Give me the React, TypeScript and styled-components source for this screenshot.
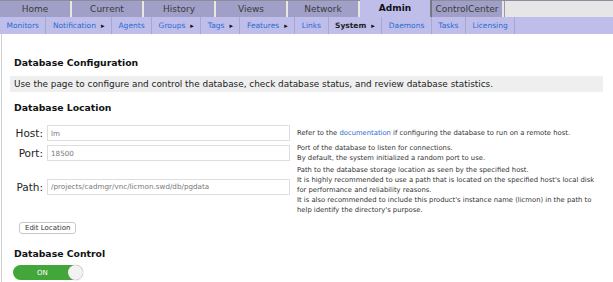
import styled, { createGlobalStyle } from "styled-components";

const GlobalStyle = createGlobalStyle`
  html, body {
    margin: 0;
    padding: 0;
    background: #fff;
    font-family: "DejaVu Sans", Verdana, sans-serif;
  }
`;

const tabs = [
  "Home",
  "Current",
  "History",
  "Views",
  "Network",
  "Admin",
  "ControlCenter",
];

const subItems = [
  { label: "Monitors" },
  { label: "Notification", arrow: true },
  { label: "Agents" },
  { label: "Groups", arrow: true },
  { label: "Tags", arrow: true },
  { label: "Features", arrow: true },
  { label: "Links" },
  { label: "System", arrow: true, active: true },
  { label: "Daemons" },
  { label: "Tasks" },
  { label: "Licensing" },
];

export default function App() {
  return (
    <>
      <GlobalStyle />
      <TabBar>
        {tabs.map((t) => (
          <Tab key={t} $active={t === "Admin"}>
            {t}
          </Tab>
        ))}
        <TabFill />
      </TabBar>
      <SubNav>
        {subItems.map((s) => (
          <SubItem key={s.label} $active={s.active}>
            {s.label}
            {s.arrow && <Arrow>▸</Arrow>}
          </SubItem>
        ))}
      </SubNav>
      <Content>
        <Heading>Database Configuration</Heading>
        <Description>
          Use the page to configure and control the database, check database
          status, and review database statistics.
        </Description>
        <Heading>Database Location</Heading>
        <FormGrid>
          <Label>Host:</Label>
          <Input defaultValue="lm" />
          <Help>
            Refer to the <Link href="#">documentation</Link> if configuring the
            database to run on a remote host.
          </Help>

          <Label>Port:</Label>
          <Input defaultValue="18500" />
          <Help>
            Port of the database to listen for connections.
            <br />
            By default, the system initialized a random port to use.
          </Help>

          <Label $raise>Path:</Label>
          <Input $raise defaultValue="/projects/cadmgr/vnc/licmon.swd/db/pgdata" />
          <Help>
            Path to the database storage location as seen by the specified
            host.
            <br />
            It is highly recommended to use a path that is located on the
            specified host's local disk
            <br />
            for performance and reliability reasons.
            <br />
            It is also recommended to include this product's instance name
            (licmon) in the path to
            <br />
            help identify the directory's purpose.
          </Help>
        </FormGrid>
        <ButtonRow>
          <Button>Edit Location</Button>
        </ButtonRow>
        <Heading>Database Control</Heading>
        <Toggle>
          <ToggleText>ON</ToggleText>
          <Knob />
        </Toggle>
      </Content>
    </>
  );
}

const TabBar = styled.div`
  display: flex;
  height: 17px;
  border-top: 1px solid #8c8c9c;
  box-sizing: border-box;
`;

const Tab = styled.div<{ $active?: boolean }>`
  width: 70px;
  flex: none;
  display: flex;
  align-items: center;
  justify-content: center;
  font-size: 9px;
  color: ${(p) => (p.$active ? "#111" : "#3a3a3a")};
  font-weight: ${(p) => (p.$active ? "bold" : "normal")};
  background: ${(p) => (p.$active ? "#bfbeeb" : "#a09fc8")};
  border-right: 2px solid ${(p) => (p.$active ? "#77778a" : "#e8e8e0")};
  margin-top: ${(p) => (p.$active ? "-1px" : "0")};
  padding-bottom: ${(p) => (p.$active ? "2px" : "0")};
`;

const TabFill = styled.div`
  flex: 1;
  background: #e6e6e6;
  border-left: 1px solid #9a9aa8;
`;

const SubNav = styled.div`
  display: flex;
  height: 17px;
  background: #bfbeeb;
`;

const SubItem = styled.div<{ $active?: boolean }>`
  display: flex;
  align-items: center;
  padding: 0 6.5px;
  font-size: 7.5px;
  font-weight: ${(p) => (p.$active ? "bold" : "normal")};
  color: ${(p) => (p.$active ? "#222" : "#2a6bd0")};
  border-right: 1px solid #a8a7d2;
`;

const Arrow = styled.span`
  color: #111;
  font-size: 7px;
  margin-left: 5px;
`;

const Content = styled.div`
  margin-left: 1px;
  border-left: 1px solid #cfcfcf;
  padding: 23px 10px 2px 12px;
  height: 248px;
  box-sizing: border-box;
`;

const Heading = styled.div`
  font-weight: bold;
  font-size: 9.3px;
  line-height: 11px;
  color: #111;
`;

const Description = styled.div`
  background: #efefef;
  font-size: 8.9px;
  line-height: 10px;
  color: #222;
  padding: 3px 4px;
  margin: 8px 0 10px -4px;
`;

const FormGrid = styled.div`
  display: grid;
  grid-template-columns: 29px 243px 1fr;
  column-gap: 4px;
  row-gap: 2px;
  align-items: center;
  margin-top: 12px;
`;

const Label = styled.div<{ $raise?: boolean }>`
  font-size: 10.5px;
  color: #222;
  text-align: right;
  margin-bottom: ${(p) => (p.$raise ? "7px" : "0")};
`;

const Input = styled.input<{ $raise?: boolean }>`
  box-sizing: border-box;
  height: 16px;
  width: 243px;
  border: 1px solid #dedede;
  font-family: "DejaVu Sans", sans-serif;
  font-size: 7.2px;
  color: #777;
  padding: 0 3px;
  outline: none;
  margin-bottom: ${(p) => (p.$raise ? "7px" : "0")};
`;

const Help = styled.div`
  font-size: 6.8px;
  line-height: 10px;
  color: #333;
  margin-left: 3px;
  white-space: nowrap;
`;

const Link = styled.a`
  color: #2a6bd0;
  text-decoration: none;
`;

const ButtonRow = styled.div`
  padding-left: 5px;
  margin: 7px 0 14px;
  display: flex;
`;

const Button = styled.button`
  font-family: "DejaVu Sans", sans-serif;
  font-size: 7px;
  color: #333;
  background: #fff;
  border: 1px solid #c8c8c8;
  border-radius: 3px;
  height: 12px;
  padding: 0 5px;
  display: flex;
  align-items: center;
`;

const Toggle = styled.div`
  width: 70px;
  height: 15px;
  margin: 6px 0 0 -1px;
  border-radius: 8px;
  background: #43a63a;
  display: flex;
  align-items: center;
  justify-content: space-between;
  padding-left: 24px;
  box-sizing: border-box;
`;

const ToggleText = styled.span`
  color: #fff;
  font-size: 7px;
`;

const Knob = styled.div`
  width: 15px;
  height: 15px;
  border-radius: 50%;
  background: #f2f2f2;
  box-shadow: 0 0 1px #888;
`;
